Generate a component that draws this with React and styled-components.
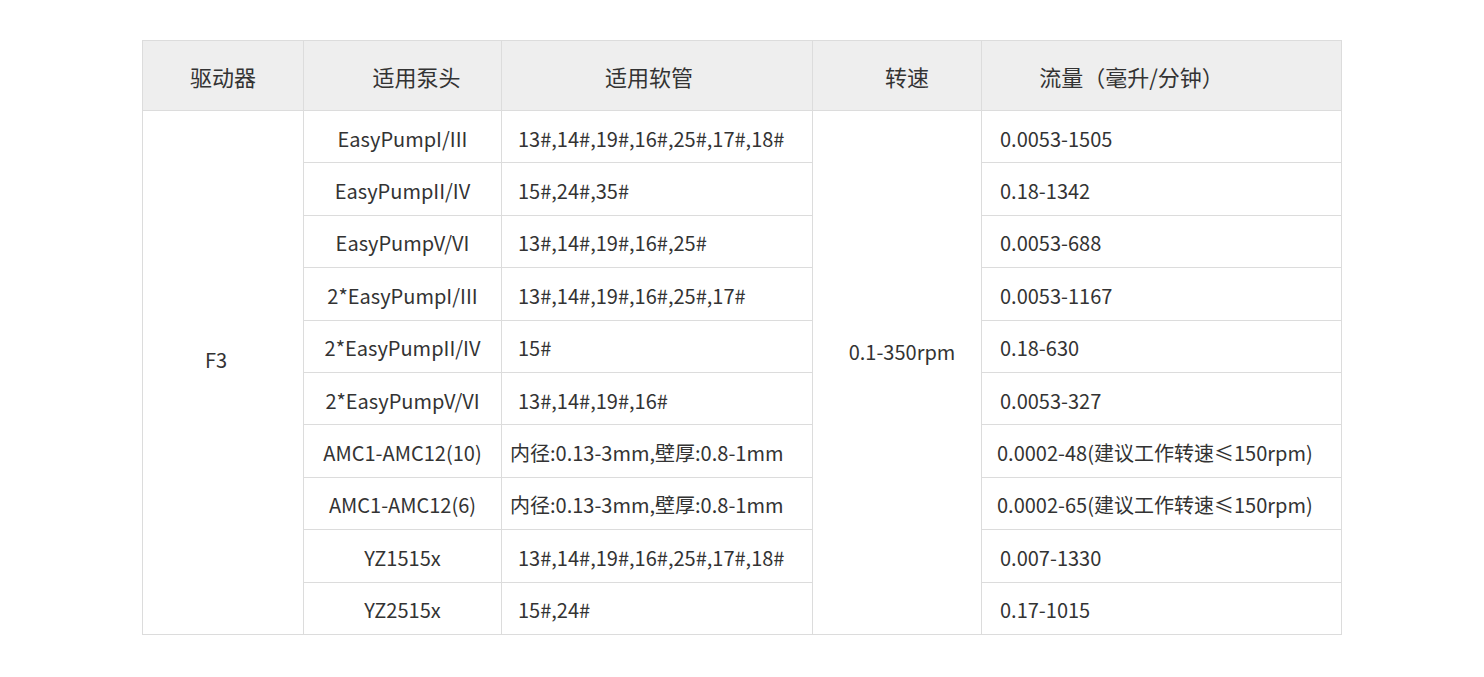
import styled, { createGlobalStyle } from "styled-components";

const GlobalStyle = createGlobalStyle`
  body {
    margin: 0;
    background: #fff;
    font-family: "Noto Sans CJK SC", "Noto Sans", sans-serif;
    color: #333;
  }
`;

const rows = [
  { head: "EasyPumpI/III", tube: "13#,14#,19#,16#,25#,17#,18#", flow: "0.0053-1505" },
  { head: "EasyPumpII/IV", tube: "15#,24#,35#", flow: "0.18-1342" },
  { head: "EasyPumpV/VI", tube: "13#,14#,19#,16#,25#", flow: "0.0053-688" },
  { head: "2*EasyPumpI/III", tube: "13#,14#,19#,16#,25#,17#", flow: "0.0053-1167" },
  { head: "2*EasyPumpII/IV", tube: "15#", flow: "0.18-630" },
  { head: "2*EasyPumpV/VI", tube: "13#,14#,19#,16#", flow: "0.0053-327" },
  { head: "AMC1-AMC12(10)", tube: "内径:0.13-3mm,壁厚:0.8-1mm", flow: "0.0002-48(建议工作转速≤150rpm)", tight: true },
  { head: "AMC1-AMC12(6)", tube: "内径:0.13-3mm,壁厚:0.8-1mm", flow: "0.0002-65(建议工作转速≤150rpm)", tight: true },
  { head: "YZ1515x", tube: "13#,14#,19#,16#,25#,17#,18#", flow: "0.007-1330" },
  { head: "YZ2515x", tube: "15#,24#", flow: "0.17-1015" },
];

const App = () => {
  return (
    <>
      <GlobalStyle />
      <Page>
        <SpecTable>
          <colgroup>
            <col style={{ width: 161 }} />
            <col style={{ width: 198 }} />
            <col style={{ width: 311 }} />
            <col style={{ width: 169 }} />
            <col style={{ width: 360 }} />
          </colgroup>
          <thead>
            <tr>
              <HeadCell>驱动器</HeadCell>
              <HeadCell $shift={14}>适用泵头</HeadCell>
              <HeadCell $shift={-8}>适用软管</HeadCell>
              <HeadCell $shift={10}>转速</HeadCell>
              <HeadCell $shift={-30}>流量（毫升/分钟）</HeadCell>
            </tr>
          </thead>
          <tbody>
            {rows.map((r, i) => (
              <BodyRow key={r.head}>
                {i === 0 && (
                  <SpanCell rowSpan={rows.length} $lift={13} $shift={-7}>
                    F3
                  </SpanCell>
                )}
                <CenterCell>{r.head}</CenterCell>
                <LeftCell $indent={r.tight ? 8 : 16}>{r.tube}</LeftCell>
                {i === 0 && (
                  <SpanCell rowSpan={rows.length} $lift={21} $shift={5}>
                    0.1-350rpm
                  </SpanCell>
                )}
                <LeftCell $indent={r.tight ? 15 : 18}>{r.flow}</LeftCell>
              </BodyRow>
            ))}
          </tbody>
        </SpecTable>
      </Page>
    </>
  );
};

const Page = styled.div`
  padding-top: 40px;
  display: flex;
  justify-content: center;
`;

const SpecTable = styled.table`
  width: 1199px;
  border-collapse: collapse;
  table-layout: fixed;
  font-size: 20px;
  color: #333;

  td,
  th {
    border: 1px solid #dcdcdc;
    padding: 0;
    white-space: nowrap;
  }
`;

const HeadCell = styled.th`
  height: 69px;
  background: #eeeeee;
  font-weight: 400;
  font-size: 22px;
  text-align: center;
  padding-left: ${(p) => (p.$shift > 0 ? p.$shift * 2 : 0)}px !important;
  padding-right: ${(p) => (p.$shift < 0 ? -p.$shift * 2 : 0)}px !important;
`;

const BodyRow = styled.tr`
  height: 52.4px;
`;

const CenterCell = styled.td`
  text-align: center;
  vertical-align: middle;
  padding-top: 3px !important;
`;

const LeftCell = styled.td`
  text-align: left;
  vertical-align: middle;
  padding-top: 3px !important;
  padding-left: ${(p) => p.$indent}px !important;
`;

const SpanCell = styled.td`
  text-align: center;
  vertical-align: middle;
  padding-bottom: ${(p) => p.$lift * 2}px !important;
  padding-left: ${(p) => (p.$shift > 0 ? p.$shift * 2 : 0)}px !important;
  padding-right: ${(p) => (p.$shift < 0 ? -p.$shift * 2 : 0)}px !important;
`;

export default App;
